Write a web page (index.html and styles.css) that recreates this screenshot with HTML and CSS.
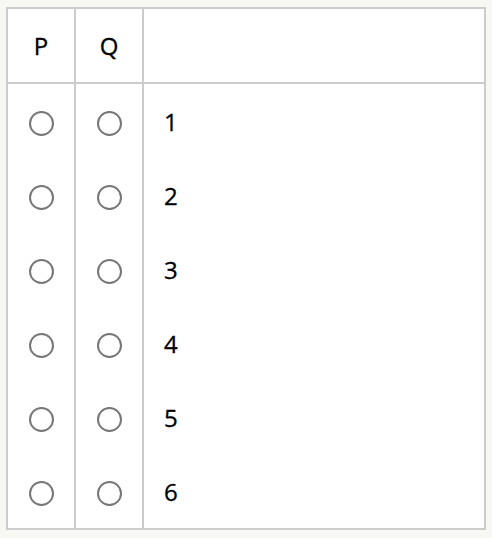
FILE: index.html
```html
<!DOCTYPE html>
<html>
<head>
<meta charset="utf-8">
<link rel="stylesheet" href="styles.css">
</head>
<body>
<table class="grid">
  <thead>
    <tr><th class="opt">P</th><th class="opt">Q</th><th class="label"></th></tr>
  </thead>
  <tbody>
    <tr><td class="opt"><input type="radio" name="r1" class="radio"></td><td class="opt"><input type="radio" name="r1" class="radio"></td><td class="label">1</td></tr>
    <tr><td class="opt"><input type="radio" name="r2" class="radio"></td><td class="opt"><input type="radio" name="r2" class="radio"></td><td class="label">2</td></tr>
    <tr><td class="opt"><input type="radio" name="r3" class="radio"></td><td class="opt"><input type="radio" name="r3" class="radio"></td><td class="label">3</td></tr>
    <tr><td class="opt"><input type="radio" name="r4" class="radio"></td><td class="opt"><input type="radio" name="r4" class="radio"></td><td class="label">4</td></tr>
    <tr><td class="opt"><input type="radio" name="r5" class="radio"></td><td class="opt"><input type="radio" name="r5" class="radio"></td><td class="label">5</td></tr>
    <tr><td class="opt"><input type="radio" name="r6" class="radio"></td><td class="opt"><input type="radio" name="r6" class="radio"></td><td class="label">6</td></tr>
  </tbody>
</table>
</body>
</html>
```
FILE: styles.css
```css
html, body {
  margin: 0;
  padding: 0;
  background: #f7f7f3;
}
body {
  padding: 7px 6px;
  font-family: "Open Sans", "DejaVu Sans", sans-serif;
  color: #000;
}
.grid {
  border-collapse: collapse;
  background: #fff;
  width: 480px;
  table-layout: fixed;
}
.grid th, .grid td {
  border-left: 2px solid #ccc;
  border-right: 2px solid #ccc;
  padding: 0;
  font-size: 24px;
  font-weight: 500;
  line-height: 1.2;
  -webkit-text-stroke: 0.3px #000;
}
.grid thead th {
  border-top: 2px solid #ccc;
  border-bottom: 2px solid #ccc;
  height: 71px;
  padding-top: 2px;
}
.grid tbody tr:last-child td {
  border-bottom: 2px solid #ccc;
}
.grid tbody td {
  height: 74px;
}
.grid tbody td.label {
  height: 71px;
  padding-top: 3px;
}
.opt {
  width: 66px;
  text-align: center;
}
.label {
  text-align: left;
  padding-left: 20px !important;
}
.radio {
  appearance: none;
  -webkit-appearance: none;
  margin: 0;
  width: 25px;
  height: 25px;
  border: 2px solid #777;
  border-radius: 50%;
  background: #fff;
  vertical-align: middle;
  display: inline-block;
}
```
